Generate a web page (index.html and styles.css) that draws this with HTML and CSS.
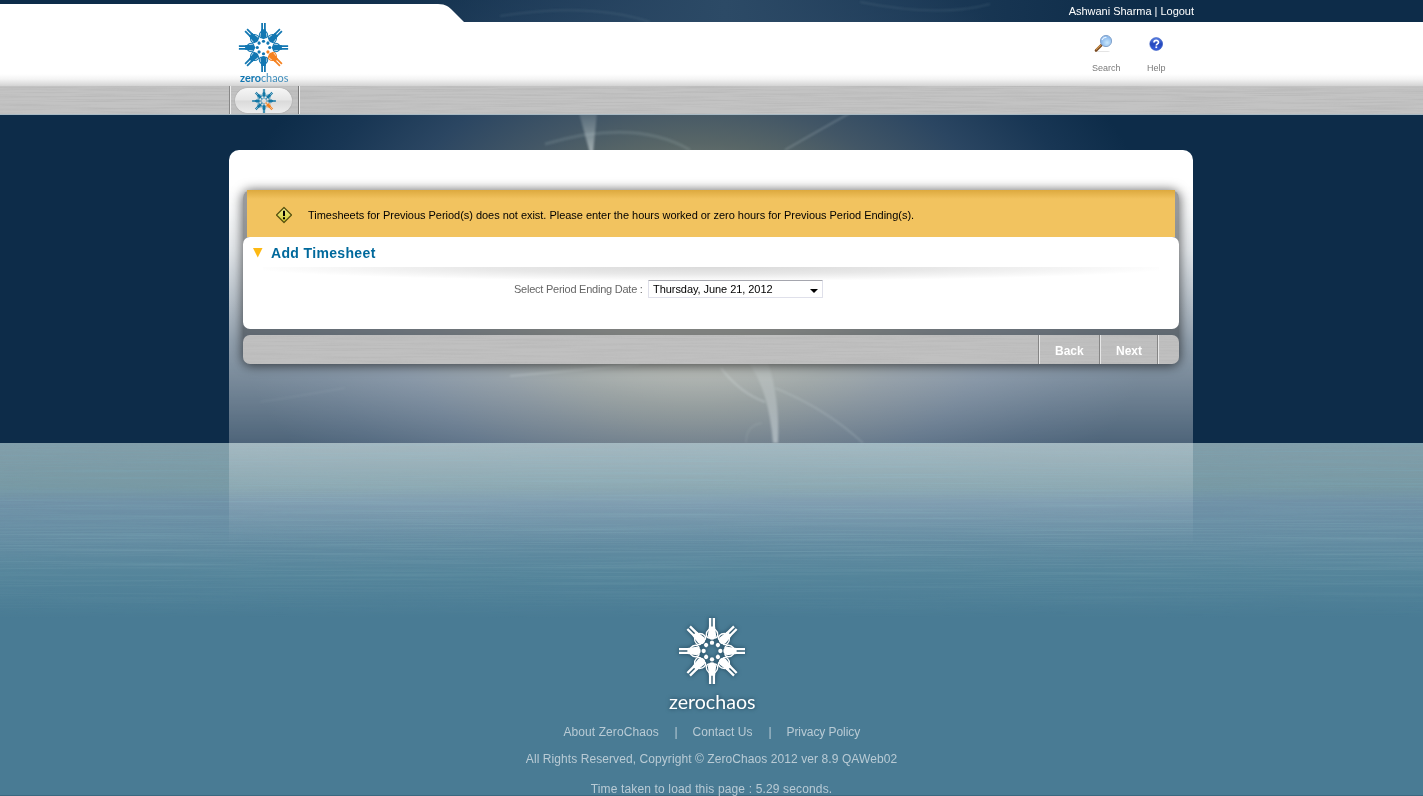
FILE: index.html
```html
<!DOCTYPE html>
<html lang="en">
<head>
<meta charset="utf-8">
<title>Add Timesheet</title>
<link rel="stylesheet" href="styles.css">
</head>
<body>
<svg class="defs" width="0" height="0" aria-hidden="true">
  <defs>
    <g id="person">
      <path d="M-3.100-33.500h2.400v12h-2.400zM.7-33.500h2.400v12h-2.400z"/>
      <path d="M-3.100-25L-4.200-15.500Q-3.500-11.500 0-11.500T4.200-15.500L3.100-25z"/>
      <circle cy="-8.500" r="2.200"/>
      <path d="M-3-13C-6.500-14-7-18.500-3-22M3-13C6.500-14 7-18.500 3-22" fill="none" stroke="currentColor" stroke-width="1.400"/>
    </g>
    <g id="ring">
      <use href="#person"/><use href="#person" transform="rotate(45)"/><use href="#person" transform="rotate(90)"/>
      <use href="#person" transform="rotate(180)"/><use href="#person" transform="rotate(225)"/>
      <use href="#person" transform="rotate(270)"/><use href="#person" transform="rotate(315)"/>
    </g>
  </defs>
</svg>

<svg class="backdrop" width="1423" height="796" viewBox="0 0 1423 796" aria-hidden="true">
  <defs>
    <radialGradient id="glow" cx="0" cy="0" r="1" gradientUnits="userSpaceOnUse" gradientTransform="translate(695 275) scale(470 330)">
      <stop offset="0" stop-color="#9c9d89"/><stop offset=".25" stop-color="#7b8177"/><stop offset=".4" stop-color="#586667"/><stop offset=".52" stop-color="#425666"/>
      <stop offset=".68" stop-color="#2b4662"/><stop offset=".85" stop-color="#183654"/><stop offset="1" stop-color="#0d2c49"/>
    </radialGradient>
    <linearGradient id="band" x2="1"><stop offset="0" stop-color="#26415e" stop-opacity="0"/><stop offset=".5" stop-color="#2c4a66"/><stop offset="1" stop-color="#26415e" stop-opacity="0"/></linearGradient>
    <linearGradient id="sea" x2="0" y2="1">
      <stop offset="0" stop-color="#839ea9"/><stop offset=".25" stop-color="#7899a4"/><stop offset=".34" stop-color="#7091a7"/>
      <stop offset=".55" stop-color="#648ca2"/><stop offset=".75" stop-color="#55859b"/><stop offset="1" stop-color="#497b94"/>
    </linearGradient>
    <linearGradient id="fade" x2="0" y2="1"><stop offset="0" stop-color="#fff"/><stop offset=".6" stop-color="#ccc"/><stop offset="1" stop-color="#000"/></linearGradient>
    <mask id="fadeMask"><rect y="443" width="1423" height="175" fill="url(#fade)"/></mask>
    <filter id="grain" x="0" y="0" width="1" height="1">
      <feTurbulence type="fractalNoise" baseFrequency=".004 .7" numOctaves="3" seed="4"/>
      <feColorMatrix values="0 0 0 0 .2  0 0 0 0 .38  0 0 0 0 .46  2.200 0 0 0 -.85"/>
    </filter>
    <filter id="soft" x="-50%" y="-50%" width="200%" height="200%"><feGaussianBlur stdDeviation="1.300"/></filter>
    <linearGradient id="beamFade" x2="0" y2="1"><stop offset="0" stop-color="#c6d4d6" stop-opacity=".2"/><stop offset="1" stop-color="#d8e2e4" stop-opacity=".75"/></linearGradient>
  </defs>
  <rect width="1423" height="443" fill="#0d2c49"/>
  <rect x="225" width="970" height="443" fill="url(#glow)"/>
  <rect x="300" width="850" height="22" fill="url(#band)"/>
  <g filter="url(#soft)">
    <path d="M579 113H597L593 153H590z" fill="url(#beamFade)" opacity=".8"/>
    <path d="M748 362Q769 390 773 443H778Q780 400 768 362z" fill="url(#beamFade)" opacity=".65"/>
  </g>
  <g fill="none" stroke="#c6d4d6" filter="url(#soft)">
    <path d="M545 144Q635 118 690 150" stroke-width="3" opacity=".15"/>
    <path d="M785 150Q825 127 850 113" stroke-width="2" opacity=".25"/>
    <path d="M721 368Q740 393 765 402" stroke-width="2" opacity=".3"/>
    <path d="M775 388Q825 408 863 443" stroke-width="1.500" opacity=".22"/>
    <path d="M510 376Q580 370 640 364" stroke-width="1.500" opacity=".3"/>
    <path d="M260 402Q300 396 345 388" stroke-width="1.500" opacity=".08"/>
    <path d="M746 443Q746 425 762 423" stroke-width="1.500" opacity=".12"/>
    <path d="M500 16Q590 2 650 22M860 2Q940 18 990 4" stroke-width="1.500" opacity=".12"/>
  </g>
  <rect y="443" width="1423" height="175" fill="url(#sea)"/>
  <g mask="url(#fadeMask)"><rect y="443" width="1423" height="175" filter="url(#grain)" opacity=".5"/></g>
  <rect y="618" width="1423" height="178" fill="#497b94"/>
  <path d="M0 795.500H1423" stroke="#3b6880"/>
</svg>

<header class="header">
  <div class="topbar">
    <svg class="tab" width="464" height="18" viewBox="0 0 464 18"><path d="M0 0H438C446 0 449 3 453 7L464 18H0z" fill="#fff"/></svg>
    <div class="account"><a>Ashwani Sharma</a> | <a>Logout</a></div>
  </div>
  <div class="masthead">
    <div class="masthead-inner">
      <svg class="logo" width="54" height="64" viewBox="0 0 54 64">
        <g transform="translate(27.500 25.500) scale(.735)"><use href="#ring" color="#1277b2" fill="#1277b2"/><use href="#person" transform="rotate(135)" color="#f58220" fill="#f58220"/></g>
        <text class="logo-text" x="4" y="59.500" textLength="48.500" lengthAdjust="spacingAndGlyphs"><tspan class="logo-bold">zero</tspan><tspan>chaos</tspan></text>
      </svg>
      <nav class="tools">
        <a class="tool tool-search">
          <svg width="20" height="20" viewBox="0 0 20 20"><defs><radialGradient id="lens" cx=".6" cy=".65"><stop offset="0" stop-color="#c9e8fd"/><stop offset="1" stop-color="#8cb9ec"/></radialGradient></defs>
            <ellipse cx="10" cy="17.500" rx="7" ry=".6" fill="#e4e4e4"/><path d="M3 16.500L8.500 11" stroke="#7a4a22" stroke-width="2.600" stroke-linecap="round"/><path d="M3 15.700L8 10.800" stroke="#d59a4c" stroke-width="1.100"/>
            <circle cx="13" cy="7" r="5.600" fill="url(#lens)" stroke="#86a5cc" stroke-width="1"/><path d="M9 6Q10.500 3 13.500 3.500" stroke="#e8f5ff" stroke-width="1.200" fill="none"/></svg>
          <span>Search</span></a>
        <a class="tool tool-help">
          <svg width="20" height="20" viewBox="0 0 20 20"><defs><linearGradient id="orb" x2="0" y2="1"><stop offset="0" stop-color="#5d83e5"/><stop offset=".5" stop-color="#2448bd"/><stop offset="1" stop-color="#365fe0"/></linearGradient></defs>
            <circle cx="9.200" cy="10" r="6.400" fill="url(#orb)" stroke="#3055bd" stroke-width=".6"/><path d="M7 8.500C7 5.700 11.500 5.700 11.500 8.300C11.500 9.900 9.300 9.800 9.300 11.500" fill="none" stroke="#fff" stroke-width="1.700"/><rect x="8.400" y="12.400" width="1.800" height="1.700" fill="#fff"/></svg>
          <span>Help</span></a>
      </nav>
    </div>
  </div>
  <nav class="navbar">
    <svg class="brushed" width="1423" height="28" aria-hidden="true">
      <defs><filter id="metal" x="0" y="0" width="1" height="1"><feTurbulence type="fractalNoise" baseFrequency=".012 .6" numOctaves="3" seed="9"/><feColorMatrix values="0 0 0 0 .4 0 0 0 0 .4 0 0 0 0 .4 2 0 0 0 -.8"/></filter></defs>
      <rect width="1423" height="28" filter="url(#metal)" opacity=".45"/>
    </svg>
    <div class="navbar-inner"><a class="home">
      <svg width="26" height="24" viewBox="-13 -12 26 24"><g transform="scale(.355)"><use href="#ring" color="#1277a5" fill="#1277a5"/><use href="#person" transform="rotate(135)" color="#f58220" fill="#f58220"/></g></svg>
    </a></div>
  </nav>
</header>

<main class="panel">
  <section class="stack">
    <div class="notice">
      <svg width="18" height="18" viewBox="0 0 18 18"><defs><linearGradient id="sign" x2="0" y2="1"><stop offset="0" stop-color="#f3ee91"/><stop offset="1" stop-color="#cdc92c"/></linearGradient></defs>
        <path d="M9 1.500L16.500 9L9 16.500L1.500 9z" fill="url(#sign)" stroke="#55500f" stroke-width="1.200" stroke-linejoin="round"/><path d="M9 4.800V10M9 11.300v1.900" stroke="#000" stroke-width="2"/></svg>
      <p>Timesheets for Previous Period(s) does not exist. Please enter the hours worked or zero hours for Previous Period Ending(s).</p>
    </div>
    <div class="card">
      <h1 class="card-title"><svg width="10" height="10" viewBox="0 0 10 10"><path d="M0 0H9.500L4.750 9.500z" fill="#fdb913"/></svg><span>Add Timesheet</span></h1>
      <div class="rule"></div>
      <div class="field">
        <label for="period">Select Period Ending Date :</label>
        <div class="picker">
          <select id="period"><option>Thursday, June 21, 2012</option></select>
          <svg width="8" height="4" viewBox="0 0 8 4"><path d="M0 0H8L4 4z"/></svg>
        </div>
      </div>
    </div>
    <div class="actions">
      <svg class="brushed" width="936" height="29" aria-hidden="true"><rect width="936" height="29" filter="url(#metal)" opacity=".3"/></svg>
      <a class="action back">Back</a><a class="action next">Next</a><span class="cap"></span>
    </div>
  </section>
</main>

<footer class="footer">
  <svg class="footer-logo" width="100" height="104" viewBox="0 0 100 104">
    <g transform="translate(50 39) scale(.985)" color="#fff" fill="#fff"><use href="#ring"/><use href="#person" transform="rotate(135)"/></g>
    <text class="footer-word" x="7" y="97" textLength="86.500" lengthAdjust="spacingAndGlyphs">zerochaos</text>
  </svg>
  <nav class="links"><a class="about">About ZeroChaos</a><i>|</i><a class="contact">Contact Us</a><i>|</i><a class="privacy">Privacy Policy</a></nav>
  <p class="copyright">All Rights Reserved, Copyright © ZeroChaos 2012 ver 8.9 QAWeb02</p>
  <p class="timing">Time taken to load this page : 5.29 seconds.</p>
</footer>
</body>
</html>
```

FILE: styles.css
```css
* { box-sizing: border-box; }
body {
  margin: 0;
  position: relative;
  height: 796px;
  overflow: hidden;
  display: flex;
  flex-direction: column;
  font: 11px/14px "Liberation Sans", Arial, sans-serif;
  background: #0d2c49;
}
svg { display: block; flex: none; }
p, h1 { margin: 0; }
.defs { position: absolute; }
.backdrop { position: absolute; left: 0; top: 0; z-index: -1; }

.topbar { height: 22px; padding-top: 4px; display: flex; justify-content: space-between; }
.account { color: #fff; padding-right: 229px; white-space: nowrap; letter-spacing: -0.02px; }
.masthead { height: 64px; background: linear-gradient(#fff 0 52px, #f4f4f4 57px, #d3d3d3 64px); }
.masthead-inner { width: 964px; margin-left: 229px; display: flex; justify-content: space-between; }
.logo { margin-left: 7px; }
.logo-text { font: 12px Lato, sans-serif; fill: #3f8dbb; }
.logo-bold { font-weight: 700; fill: #1277b2; }
.tools { display: flex; padding: 12px 27px 0 0; gap: 26px; }
.tool { display: flex; flex-direction: column; gap: 5px; color: #7b7b7b; font-size: 9px; line-height: 14px; }
.tool-search { width: 29px; }
.tool-search svg { margin-left: 1px; }
.tool-help { width: 19px; }
.tool span { margin-top: 2px; }

.navbar { position: relative; height: 29px; background: #c3c3c3; border-bottom: 1px solid #a9bac4; }
.brushed { position: absolute; left: 0; top: 0; }
.navbar-inner { position: relative; width: 70px; height: 28px; margin-left: 229px; padding: 2px 5px; border-left: 1px solid #888; border-right: 1px solid #777; box-shadow: inset 1px 0 #eee, 1px 0 #eee; }
.home { display: flex; align-items: center; justify-content: center; width: 57px; height: 25px; border-radius: 13px; background: linear-gradient(#f6f6f6, #e6e6e6 48%, #dadada 52%, #ededed); box-shadow: 0 0 1px #777; }

.panel {
  width: 964px;
  height: 395px;
  margin: 35px 0 0 229px;
  padding: 40px 14px 0;
  border-radius: 10px 10px 0 0;
  background: linear-gradient(#fff 0 36px, rgba(255,255,255,.97) 60px, rgba(255,255,255,.88) 100px, rgba(255,255,255,.7) 150px, rgba(255,255,255,.55) 190px, rgba(255,255,255,.43) 235px, rgba(255,255,255,.27) 293px, rgba(255,255,255,.12) 350px, rgba(255,255,255,0) 395px);
  overflow: hidden;
}
.stack { width: 936px; height: 174px; border-radius: 8px; box-shadow: 0 1px 11px 1px rgba(0,0,0,.6); background: rgba(20,22,24,.42); }
.notice { height: 47px; margin: 0 4px; padding: 0 28px; display: flex; align-items: center; gap: 15px; background: linear-gradient(#dca93f, #f2c35f 9px); color: #000; white-space: nowrap; letter-spacing: -0.03px; }
.notice svg { margin-top: 3px; }
.notice p { margin-top: 3px; }
.card { height: 92px; border-radius: 7px; background: #fff; }
.card-title { height: 30px; padding: 2px 0 0 10px; display: flex; align-items: center; gap: 8px; font: bold 14px/18px "Liberation Sans", Arial, sans-serif; letter-spacing: 0.35px; color: #00699c; }
.rule { height: 14px; margin: 0 20px; background: radial-gradient(ellipse 52% 100% at 50% 0, #dadada, #e8e8e8 50%, #fff); }
.field { display: flex; align-items: center; margin: -1px 0 0 271px; gap: 5px; color: #666; white-space: nowrap; }
.field label { width: 129px; letter-spacing: -0.24px; }
.picker { position: relative; width: 175px; height: 18px; }
.picker select { appearance: none; width: 175px; height: 18px; margin: 0; padding: 0 3px 0 4px; border: 1px solid #dfe0ea; border-top-color: #a5a6ae; border-radius: 1px; background: #fff; font: inherit; letter-spacing: -0.06px; color: #000; display: block; }
.picker svg { position: absolute; right: 5px; top: 9px; }
.actions { position: relative; display: flex; justify-content: flex-end; height: 29px; margin-top: 6px; border-radius: 7px; overflow: hidden; background: #c0c0c0; }
.action, .cap { position: relative; border-left: 1px solid #858585; box-shadow: inset 1px 0 #e7e7e7; }
.action { padding: 9px 0 0 16px; font-weight: bold; font-size: 12px; line-height: 14px; color: #fff; }
.back { width: 61px; }
.next { width: 58px; }
.cap { width: 22px; }

.footer { display: flex; flex-direction: column; align-items: center; margin-top: 67px; font-size: 12px; line-height: 14px; color: #b9cbd5; white-space: nowrap; letter-spacing: 0.08px; }
.footer-logo { filter: drop-shadow(0 0 2px #1c4055); }
.footer-word { font: 20px Lato, sans-serif; fill: #fff; letter-spacing: 0; }
.links { display: flex; margin-top: 9px; }
.links i { font-style: normal; width: 33px; text-align: center; }
.about { width: 96px; }
.contact { width: 61px; }
.privacy { width: 73px; letter-spacing: -0.08px; }
.copyright { margin-top: 13px; }
.timing { margin-top: 16px; letter-spacing: 0.15px; }
```
